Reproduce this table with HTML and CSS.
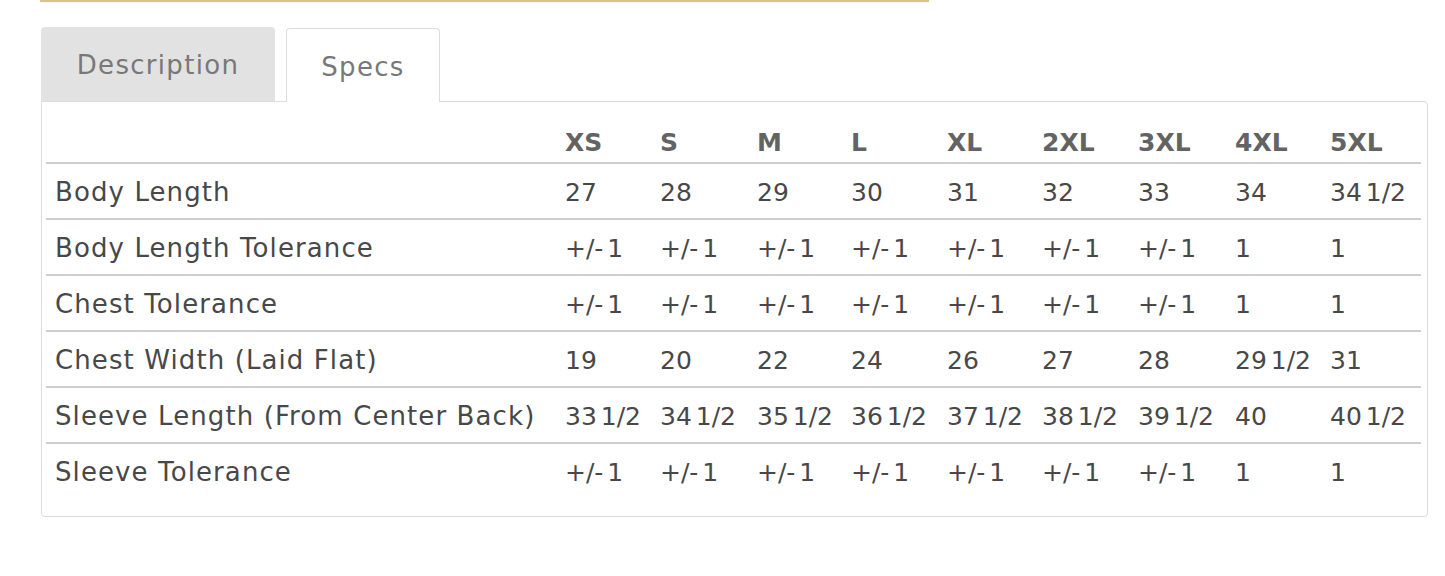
FILE: index.html
```html
<!DOCTYPE html>
<html lang="en">
<head>
<meta charset="utf-8">
<title>Specs</title>
<link rel="stylesheet" href="styles.css">
</head>
<body>
<div class="page">
  <div class="topline"></div>
  <div class="tabs">
    <div class="tab tab-inactive">Description</div>
    <div class="tab tab-active">Specs</div>
  </div>
  <div class="panel">
    <table class="specs">
      <colgroup>
        <col class="c-label"><col class="c1"><col class="c2"><col class="c3"><col class="c4"><col class="c5"><col class="c6"><col class="c7"><col class="c8"><col class="c9">
      </colgroup>
      <thead>
        <tr><th></th><th>XS</th><th>S</th><th>M</th><th>L</th><th>XL</th><th>2XL</th><th>3XL</th><th>4XL</th><th>5XL</th></tr>
      </thead>
      <tbody>
        <tr><td class="label">Body Length</td><td>27</td><td>28</td><td>29</td><td>30</td><td>31</td><td>32</td><td>33</td><td>34</td><td>34 1/2</td></tr>
        <tr><td class="label">Body Length Tolerance</td><td>+/- 1</td><td>+/- 1</td><td>+/- 1</td><td>+/- 1</td><td>+/- 1</td><td>+/- 1</td><td>+/- 1</td><td>1</td><td>1</td></tr>
        <tr><td class="label">Chest Tolerance</td><td>+/- 1</td><td>+/- 1</td><td>+/- 1</td><td>+/- 1</td><td>+/- 1</td><td>+/- 1</td><td>+/- 1</td><td>1</td><td>1</td></tr>
        <tr><td class="label">Chest Width (Laid Flat)</td><td>19</td><td>20</td><td>22</td><td>24</td><td>26</td><td>27</td><td>28</td><td>29 1/2</td><td>31</td></tr>
        <tr><td class="label">Sleeve Length (From Center Back)</td><td>33 1/2</td><td>34 1/2</td><td>35 1/2</td><td>36 1/2</td><td>37 1/2</td><td>38 1/2</td><td>39 1/2</td><td>40</td><td>40 1/2</td></tr>
        <tr><td class="label">Sleeve Tolerance</td><td>+/- 1</td><td>+/- 1</td><td>+/- 1</td><td>+/- 1</td><td>+/- 1</td><td>+/- 1</td><td>+/- 1</td><td>1</td><td>1</td></tr>
      </tbody>
    </table>
  </div>
</div>
</body>
</html>
```

FILE: styles.css
```css
html, body {
  margin: 0;
  padding: 0;
  background: #ffffff;
}

body {
  font-family: "DejaVu Sans", "Open Sans", sans-serif;
  color: #444444;
}

.page {
  padding-left: 41px;
  width: 1386px;
}

.topline {
  width: 889px;
  height: 2px;
  margin-left: -1px;
  background: #dcc580;
}

.tabs {
  display: flex;
  align-items: flex-end;
  gap: 11px;
  margin-top: 25px;
}

.tab {
  box-sizing: border-box;
  display: flex;
  align-items: center;
  justify-content: center;
  font-size: 26px;
  letter-spacing: 1.3px;
  color: #787878;
  border-radius: 4px 4px 0 0;
  padding-top: 2px;
}

.tab-inactive {
  width: 234px;
  height: 74px;
  background: #e2e2e2;
}

.tab-active {
  width: 154px;
  height: 74px;
  background: #ffffff;
  border: 1px solid #dcdcdc;
  border-bottom: none;
  margin-bottom: -1px;
  position: relative;
  z-index: 1;
}

.panel {
  box-sizing: border-box;
  width: 1387px;
  border: 1px solid #dcdcdc;
  border-radius: 0 4px 4px 4px;
  padding: 6px 5px 18px 4px;
}

.specs {
  width: 1375px;
  table-layout: fixed;
  border-collapse: collapse;
  font-size: 25px;
}

.c-label { width: 510px; }
.c1 { width: 95px; }
.c2 { width: 97px; }
.c3 { width: 94px; }
.c4 { width: 96px; }
.c5 { width: 95px; }
.c6 { width: 96px; }
.c7 { width: 97px; }
.c8 { width: 95px; }
.c9 { width: 100px; }

.specs th,
.specs td {
  height: 54px;
  padding: 0 0 0 9px;
  text-align: left;
  white-space: nowrap;
  vertical-align: middle;
}

.specs th {
  font-weight: bold;
  color: #636363;
  padding-top: 14px;
  height: 40px;
}

.specs td {
  color: #484848;
  word-spacing: -4px;
  padding-top: 2px;
  height: 52px;
}

.specs td.label {
  font-size: 26px;
  letter-spacing: 1.1px;
  word-spacing: 0;
}

.specs thead tr,
.specs tbody tr {
  border-bottom: 2px solid #cfcfcf;
}

.specs tbody tr:last-child {
  border-bottom: none;
}
```
